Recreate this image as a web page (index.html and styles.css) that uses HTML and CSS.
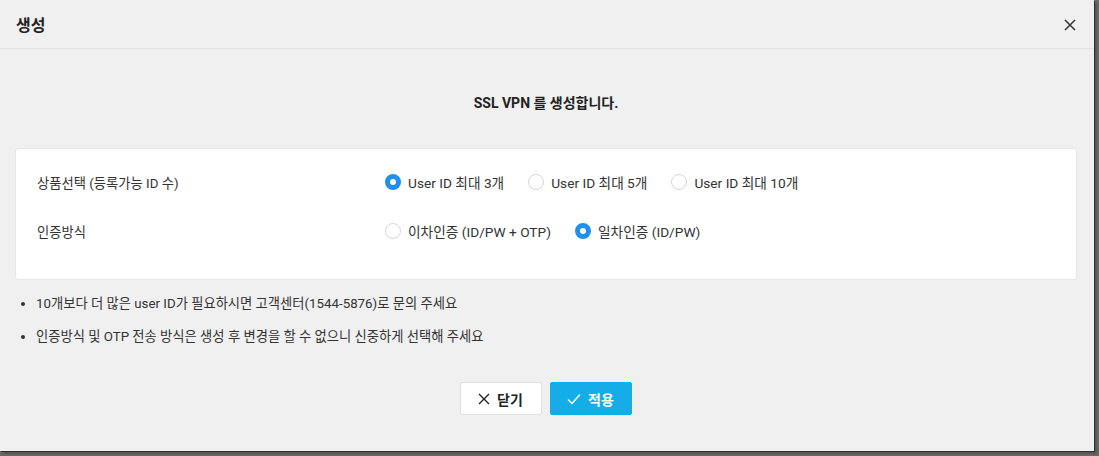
FILE: index.html
```html
<!DOCTYPE html>
<html lang="ko">
<head>
<meta charset="utf-8">
<link rel="stylesheet" href="styles.css">
</head>
<body>
<div class="dialog">
  <div class="header">
    <h1 class="title">생성</h1>
    <button class="close" aria-label="close">
      <svg width="12" height="12" viewBox="0 0 12 12"><path d="M1 1L11 11M11 1L1 11" stroke="#333" stroke-width="1.5" fill="none"/></svg>
    </button>
  </div>
  <div class="content">
    <p class="intro">SSL VPN 를 생성합니다.</p>
    <div class="card">
      <div class="row">
        <div class="label">상품선택 (등록가능 ID 수)</div>
        <div class="options">
          <label class="opt"><span class="radio checked"></span>User ID 최대 3개</label>
          <label class="opt"><span class="radio"></span>User ID 최대 5개</label>
          <label class="opt"><span class="radio"></span>User ID 최대 10개</label>
        </div>
      </div>
      <div class="row">
        <div class="label">인증방식</div>
        <div class="options">
          <label class="opt"><span class="radio"></span>이차인증 (ID/PW + OTP)</label>
          <label class="opt"><span class="radio checked"></span>일차인증 (ID/PW)</label>
        </div>
      </div>
    </div>
    <ul class="notes">
      <li>10개보다 더 많은 user ID가 필요하시면 고객센터(1544-5876)로 문의 주세요</li>
      <li>인증방식 및 OTP 전송 방식은 생성 후 변경을 할 수 없으니 신중하게 선택해 주세요</li>
    </ul>
    <div class="actions">
      <button class="btn btn-close">
        <svg width="12" height="12" viewBox="0 0 12 12"><path d="M1 1L11 11M11 1L1 11" stroke="#222" stroke-width="1.4" fill="none"/></svg>
        닫기
      </button>
      <button class="btn btn-apply">
        <svg width="14" height="12" viewBox="0 0 14 12"><path d="M1 6.5L5 10.5L13 1.5" stroke="#fff" stroke-width="1.5" fill="none"/></svg>
        적용
      </button>
    </div>
  </div>
</div>
</body>
</html>
```
FILE: styles.css
```css
* { box-sizing: border-box; }
html, body { margin: 0; padding: 0; background: #6a6a6a; }
body {
  width: 1099px;
  height: 456px;
  overflow: hidden;
  font-family: Roboto, "Noto Sans CJK KR", sans-serif;
  color: #333;
}
.dialog {
  width: 1094px;
  height: 451px;
  background: #f0f0f0;
  box-shadow: 1px 1px 0 #2e2e2e, 3px 3px 2px #555;
  display: flex;
  flex-direction: column;
}
.header {
  height: 49px;
  border-bottom: 1px solid #e2e2e2;
  display: flex;
  align-items: center;
  justify-content: space-between;
  padding: 0 18px 0 16px;
}
.title {
  margin: 0;
  font-size: 16px;
  font-weight: 700;
  color: #222;
}
.close {
  border: 0;
  background: none;
  padding: 0;
  display: flex;
  margin-top: 2px;
}
.content {
  padding: 0 17px 0 15px;
}
.intro {
  margin: 45px 0 0;
  text-align: center;
  font-size: 14px;
  font-weight: 700;
  color: #222;
  line-height: 18px;
}
.card {
  margin-top: 36px;
  background: #fff;
  border: 1px solid #e6e6e6;
  border-radius: 3px;
  height: 132px;
  padding: 21px 21px 0;
}
.row {
  display: flex;
  height: 24px;
  align-items: center;
  margin-bottom: 25px;
}
.label {
  width: 348px;
  font-size: 13.3px;
  color: #333;
}
.options {
  display: flex;
}
.opt {
  display: flex;
  align-items: center;
  font-size: 13.7px;
  color: #333;
  margin-right: 24px;
}
.radio {
  width: 16px;
  height: 16px;
  border-radius: 50%;
  border: 1px solid #d6d6d6;
  background: #fff;
  margin-right: 7px;
}
.radio.checked {
  border: 5px solid #1e90f0;
}
.notes {
  margin: 15px 0 0;
  padding: 0 0 0 21px;
  font-size: 13.3px;
  color: #333;
}
.notes li {
  line-height: 18px;
  margin-bottom: 15px;
}
.actions {
  display: flex;
  justify-content: center;
  gap: 8px;
  margin-top: 36px;
  padding-right: 1px;
}
.btn {
  width: 82px;
  height: 33px;
  border-radius: 2px;
  font-family: inherit;
  font-size: 14px;
  font-weight: 700;
  display: flex;
  align-items: center;
  justify-content: center;
  gap: 7px;
}
.btn-close {
  background: #fff;
  border: 1px solid #e0e0e0;
  color: #222;
}
.btn-apply {
  background: #14ade8;
  border: 1px solid #14ade8;
  color: #fff;
}
```
